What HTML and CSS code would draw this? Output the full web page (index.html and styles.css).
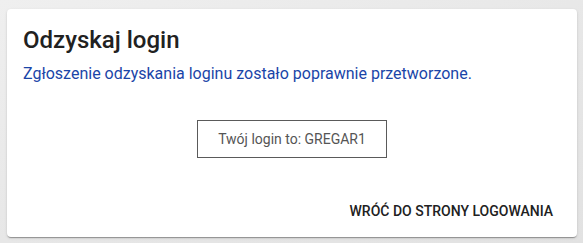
FILE: index.html
```html
<!DOCTYPE html>
<html lang="pl">
<head>
<meta charset="utf-8">
<link rel="stylesheet" href="styles.css">
</head>
<body>
<div class="page">
  <div class="card">
    <h1 class="title">Odzyskaj login</h1>
    <p class="subtitle">Zgłoszenie odzyskania loginu zostało poprawnie przetworzone.</p>
    <div class="login-row">
      <div class="login-box">Twój login to: GREGAR1</div>
    </div>
    <div class="actions">
      <button class="btn">WRÓĆ DO STRONY LOGOWANIA</button>
    </div>
  </div>
</div>
</body>
</html>
```
FILE: styles.css
```css
html, body {
  margin: 0;
  padding: 0;
}
body {
  width: 583px;
  height: 243px;
  background: linear-gradient(160deg, #efefef 0%, #e6e6e6 60%, #e2e2e2 100%);
  font-family: Roboto, "Liberation Sans", sans-serif;
  overflow: hidden;
}
.page {
  padding: 9px 6px 6px 7px;
}
.card {
  width: 570px;
  height: 228px;
  box-sizing: border-box;
  background: #fff;
  border-radius: 4px;
  box-shadow: 0 2px 1px -1px rgba(0,0,0,0.2), 0 1px 1px 0 rgba(0,0,0,0.14), 0 1px 3px 0 rgba(0,0,0,0.12);
  padding: 15px 16px 8px 16px;
  display: flex;
  flex-direction: column;
}
.title {
  margin: 0;
  font-size: 24px;
  line-height: 32px;
  font-weight: 500;
  color: #212121;
}
.subtitle {
  margin: 6px 0 0 0;
  font-size: 16px;
  line-height: 24px;
  color: #1a45a8;
}
.login-row {
  display: flex;
  justify-content: center;
  margin-top: 34px;
}
.login-box {
  width: 190px;
  height: 38px;
  box-sizing: border-box;
  border: 1px solid #5a5a5a;
  display: flex;
  align-items: center;
  justify-content: center;
  font-size: 14px;
  color: #555;
}
.actions {
  margin-top: auto;
  display: flex;
  justify-content: flex-end;
}
.btn {
  font-family: Roboto, "Liberation Sans", sans-serif;
  font-size: 14px;
  font-weight: 500;
  color: #212121;
  background: none;
  border: none;
  padding: 0 8px;
  height: 36px;
  line-height: 36px;
}
```
